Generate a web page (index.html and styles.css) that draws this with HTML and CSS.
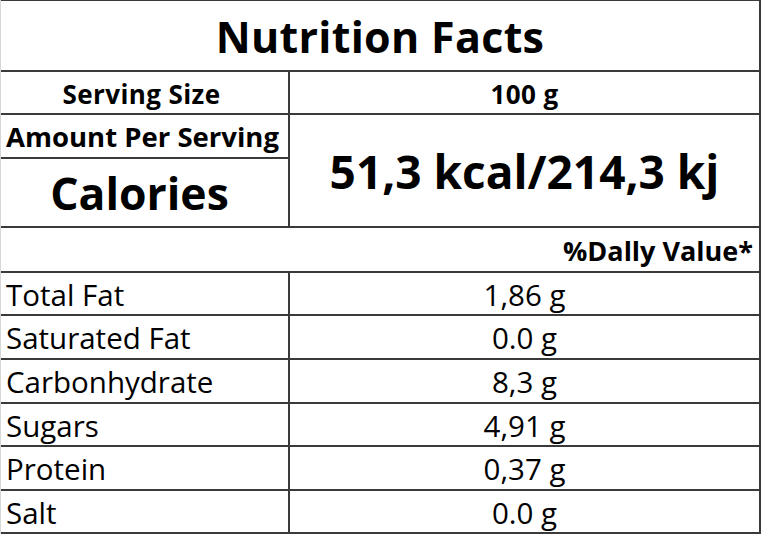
FILE: index.html
```html
<!DOCTYPE html>
<html lang="en">
<head>
<meta charset="utf-8">
<title>Nutrition Facts</title>
<link rel="stylesheet" href="styles.css">
</head>
<body>
<div class="label">
  <div class="cell title">Nutrition Facts</div>
  <div class="cell head head-left">Serving Size</div>
  <div class="cell head">100 g</div>
  <div class="cell amount">Amount Per Serving</div>
  <div class="cell kcal">51,3 kcal/214,3 kj</div>
  <div class="cell calories">Calories</div>
  <div class="cell daily">%Dally Value*</div>
  <div class="cell name">Total Fat</div>
  <div class="cell value">1,86 g</div>
  <div class="cell name">Saturated Fat</div>
  <div class="cell value">0.0 g</div>
  <div class="cell name">Carbonhydrate</div>
  <div class="cell value">8,3 g</div>
  <div class="cell name">Sugars</div>
  <div class="cell value">4,91 g</div>
  <div class="cell name">Protein</div>
  <div class="cell value">0,37 g</div>
  <div class="cell name">Salt</div>
  <div class="cell value">0.0 g</div>
</div>
</body>
</html>
```

FILE: styles.css
```css
html, body {
  margin: 0;
  padding: 0;
  background: #ffffff;
}

.label {
  width: 761px;
  height: 534px;
  box-sizing: border-box;
  display: grid;
  grid-template-columns: 287px 469px;
  grid-template-rows: 69px 41px 42px 67px 43px 41px 42px 42px 41px 42px 41px;
  gap: 2px;
  padding: 1px 2px 2px 0;
  border-left: 1px solid #d6d6d6;
  background: #3a3a3a;
  font-family: "Open Sans", "Liberation Sans", sans-serif;
  color: #000;
}

.cell {
  background: #fff;
  display: flex;
  align-items: center;
  justify-content: center;
  line-height: 1;
  white-space: nowrap;
}

.title {
  grid-column: 1 / span 2;
  font-weight: 700;
  font-size: 43px;
  letter-spacing: 0.3px;
  padding-top: 2px;
}

.head {
  font-weight: 700;
  font-size: 26px;
  letter-spacing: 0.4px;
  padding-top: 2px;
}

.head-left {
  padding-right: 6px;
}

.amount {
  font-weight: 700;
  font-size: 27.5px;
  padding-top: 2px;
  padding-right: 4px;
}

.kcal {
  grid-column: 2;
  grid-row: 3 / span 2;
  font-weight: 700;
  font-size: 46px;
}

.calories {
  grid-column: 1;
  grid-row: 4;
  font-weight: 700;
  font-size: 44.5px;
  padding-top: 2px;
  padding-right: 10px;
}

.daily {
  grid-column: 1 / span 2;
  justify-content: flex-end;
  padding-right: 6px;
  padding-top: 2px;
  font-weight: 700;
  font-size: 27px;
}

.name {
  justify-content: flex-start;
  padding-left: 5px;
  padding-top: 2px;
  font-size: 29.5px;
}

.value {
  padding-top: 2px;
  font-size: 29.5px;
}
```
